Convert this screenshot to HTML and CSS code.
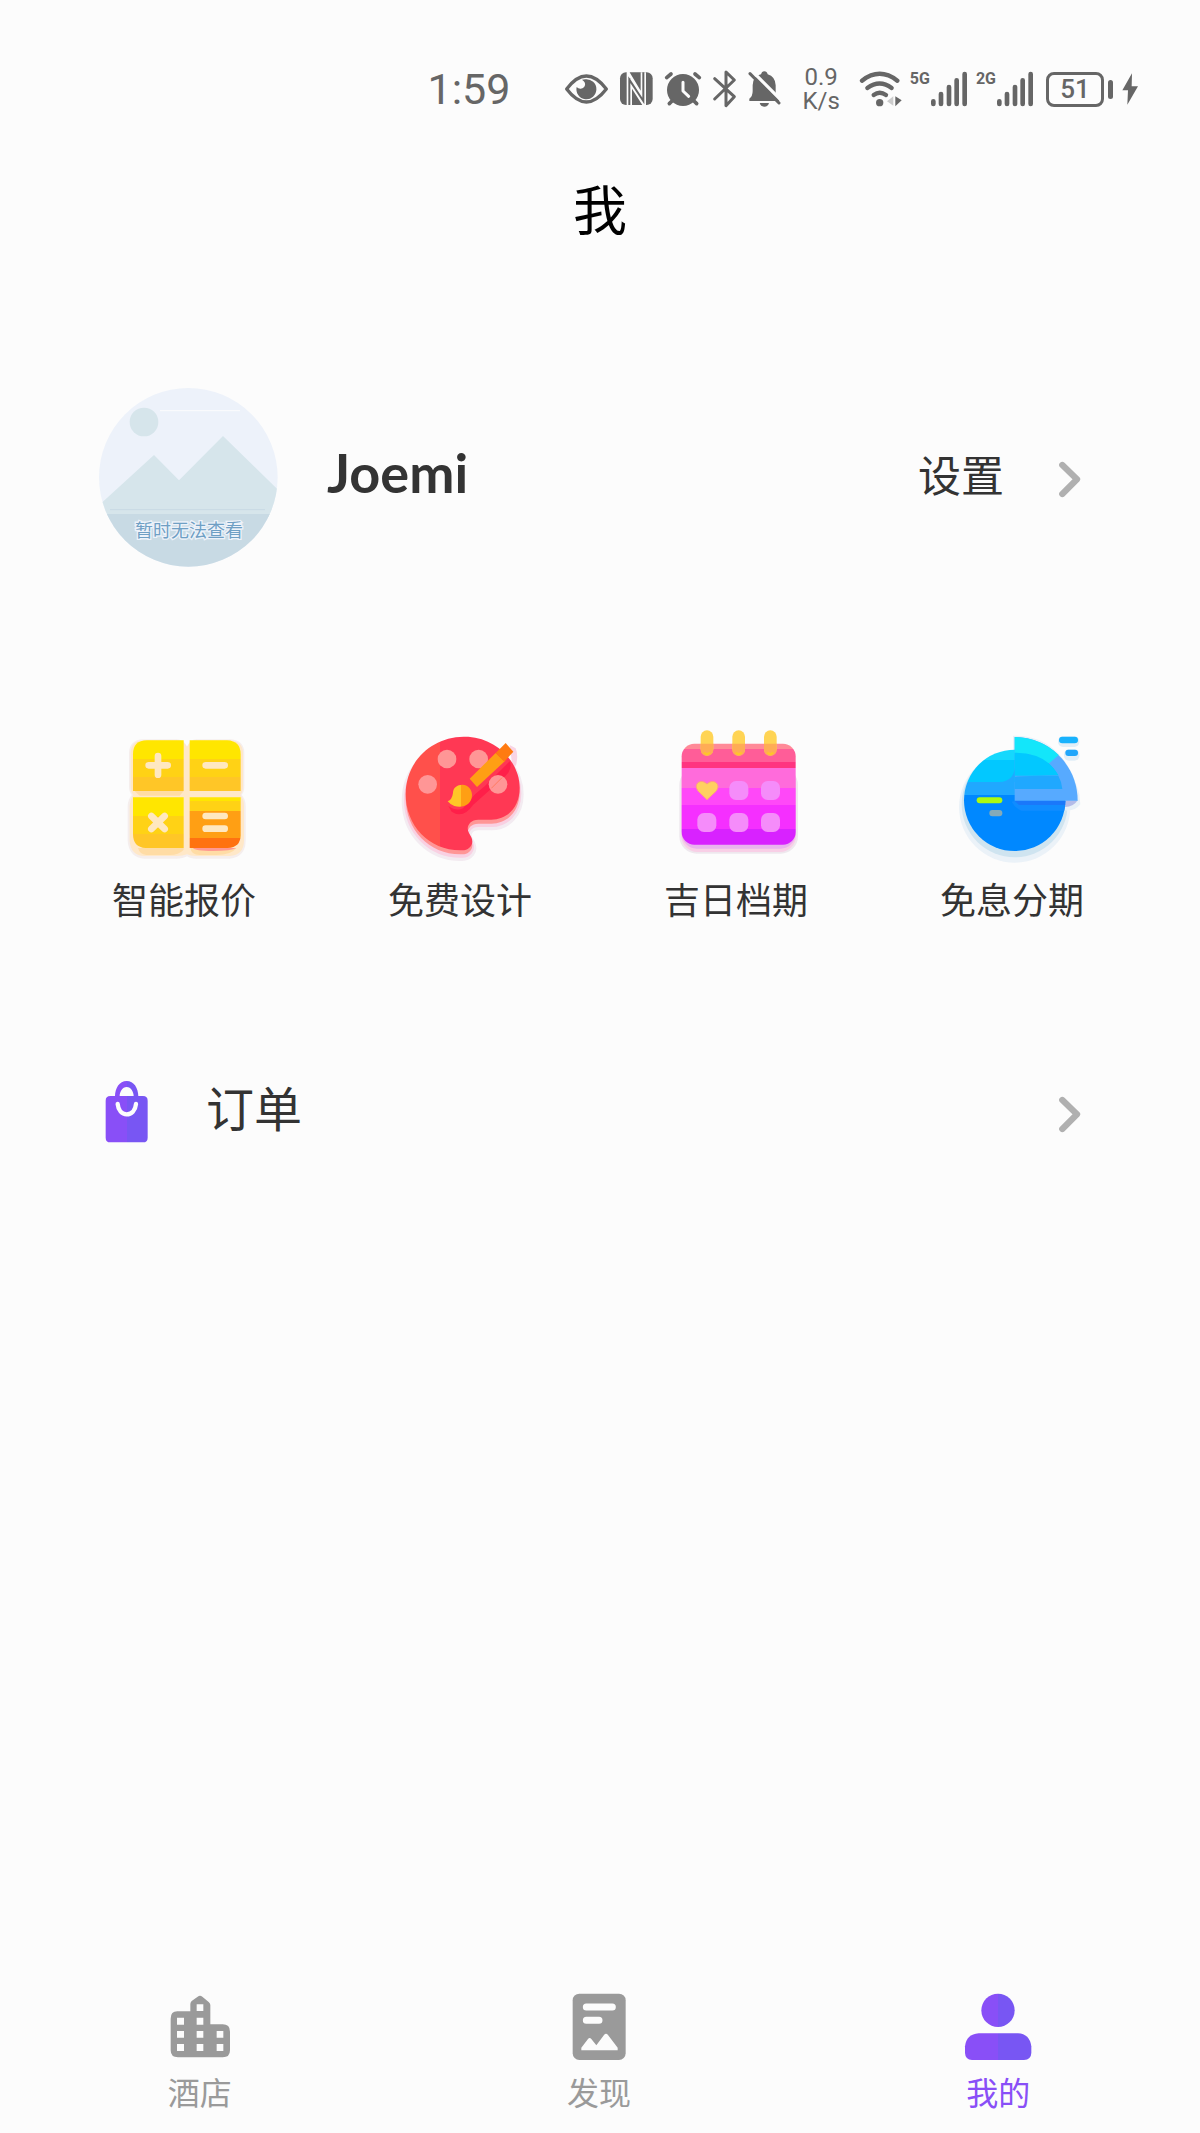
FILE: index.html
```html
<!DOCTYPE html>
<html lang="zh-CN">
<head>
  <meta charset="utf-8">
  <meta name="viewport" content="width=device-width">
  <title>我</title>
  <link rel="stylesheet" href="styles.css">
</head>
<body>
  <div class="main">
    <div class="status_bar">
      <span class="clock">1:59</span>
      <div class="status_icons">
        <svg width="46" height="40" viewBox="456 56 138 120">
          <path d="M467 116Q526 38 586 116Q526 194 467 116Z" fill="none" stroke="#666" stroke-width="10" stroke-linejoin="round"/>
          <path d="M523 87A30 30 0 1 1 497 110A15 15 0 0 0 521 108Q526 96 513 88Z" fill="#666"/>
        </svg>
        <svg width="35" height="40" viewBox="624 56 105 120">
          <rect x="627" y="66" width="98" height="98" rx="18" fill="#666"/>
          <path d="M655 164V80L697 150V66" fill="none" stroke="#fcfcfc" stroke-width="16"/>
          <path d="M653 66V95L697 164M655 76L699 150" fill="none" stroke="#fcfcfc" stroke-width="5"/>
          <path d="M655 84V164L655 88L697 152V66" fill="none" stroke="#666" stroke-width="6"/>
        </svg>
        <svg width="38" height="40" viewBox="759 56 114 120">
          <circle cx="816" cy="119" r="48" fill="#666"/>
          <path d="M767 82L780 71M865 82L852 71M783 152L775 160M849 152L857 160" stroke="#666" stroke-width="11" stroke-linecap="round"/>
          <path d="M816 96V122L833 138" fill="none" stroke="#fcfcfc" stroke-width="9" stroke-linecap="round" stroke-linejoin="round"/>
        </svg>
        <svg width="25" height="40" viewBox="903 56 75 120">
          <path d="M911 85L970 139L945 166V65L970 89L911 146" fill="none" stroke="#666" stroke-width="9" stroke-linecap="round" stroke-linejoin="round"/>
        </svg>
        <svg width="35" height="40" viewBox="1011 56 105 120">
          <path d="M1018 152V145Q1028 138 1028 122V105Q1029 77 1053 72Q1055 63 1063 63T1073 72Q1096 79 1097 105V125Q1098 138 1108 146V152Z" fill="#666"/>
          <path d="M1049 158H1077Q1074 169 1063 169T1049 158Z" fill="#666"/>
          <path d="M1026 62L1116 152" stroke="#fcfcfc" stroke-width="10"/>
          <path d="M1020 70L1107 158" stroke="#666" stroke-width="9" stroke-linecap="round"/>
        </svg>
      </div>
      <div class="net_speed">
        <div>0.9</div>
        <div>K/s</div>
      </div>
      <svg width="43" height="40" viewBox="240 56 129 120">
        <g fill="none" stroke="#666" stroke-width="13" stroke-linecap="round">
          <path d="M249 91Q302 50 355 91"/>
          <path d="M265 113Q302 86 338 113"/>
          <path d="M284 134Q302 121 321 134"/>
        </g>
        <circle cx="302" cy="157" r="11" fill="#666"/>
        <path d="M343 138V166L324 153Z" fill="#ccc"/>
        <path d="M349 138V168L368 150Z" fill="#666"/>
      </svg>
      <div class="signal">
        <span>5G</span>
        <svg width="38" height="40" viewBox="447 56 114 120">
          <path d="M457 153V161M480 131V161M504 110V161M527 90V161M551 71V161" stroke="#666" stroke-width="14" stroke-linecap="round"/>
        </svg>
      </div>
      <div class="signal">
        <span>2G</span>
        <svg width="38" height="40" viewBox="447 56 114 120">
          <path d="M457 153V161M480 131V161M504 110V161M527 90V161M551 71V161" stroke="#666" stroke-width="14" stroke-linecap="round"/>
        </svg>
      </div>
      <div class="battery">51</div>
      <svg width="16" height="40" viewBox="1026 56 48 120">
        <path d="M1056 69L1027 120H1044L1042 163L1074 108H1055Z" fill="#666"/>
      </svg>
    </div>

    <h1 class="title">我</h1>

    <div class="profile">
      <svg class="avatar" viewBox="57 53 537 537">
        <defs>
          <clipPath id="avatar_clip"><circle cx="325" cy="321" r="268"/></clipPath>
        </defs>
        <g clip-path="url(#avatar_clip)">
          <rect x="57" y="53" width="537" height="537" fill="#edf2fa"/>
          <path d="M240 121H480" stroke="#fcfcfc" stroke-width="3"/>
          <circle cx="192" cy="155" r="43" fill="#d6e5eb"/>
          <path d="M57 405L222 254L297 330L429 197L594 358V440H57Z" fill="#d6e5eb"/>
          <rect x="57" y="431" width="537" height="160" fill="#c8dae4"/>
          <path d="M90 418H555" stroke="#c8dae4" stroke-width="3"/>
        </g>
        <text class="avatar_text" x="327" y="499" text-anchor="middle">暂时无法查看</text>
      </svg>
      <span class="name">Joemi</span>
      <a class="settings" href="#settings">
        <span>设置</span>
        <svg class="arrow" viewBox="534 120 72 117">
          <path d="M547 135L591 178L547 222" fill="none" stroke="#b0b0b0" stroke-width="19" stroke-linecap="round" stroke-linejoin="round"/>
        </svg>
      </a>
    </div>

    <div class="services">
      <a href="#quote">
        <svg viewBox="28 30 450 450">
          <defs>
            <linearGradient id="yellow" x2="0" y2="1">
              <stop offset=".37" stop-color="#ffe600"/><stop offset=".37" stop-color="#ffd215"/>
              <stop offset=".72" stop-color="#ffd215"/><stop offset=".72" stop-color="#ffc627"/>
            </linearGradient>
            <linearGradient id="orange" x2="0" y2="1">
              <stop offset=".07" stop-color="#ffe600"/><stop offset=".07" stop-color="#ffd215"/>
              <stop offset=".27" stop-color="#ffd215"/><stop offset=".27" stop-color="#ff9f14"/>
              <stop offset=".8" stop-color="#ff9f14"/><stop offset=".8" stop-color="#ff7210"/>
            </linearGradient>
          </defs>
          <path d="M130 85H230Q252 85 262 106Q272 85 290 85H390Q432 86 434 125V225Q434 242 426 252Q438 265 438 285V390Q437 438 390 443H290Q272 443 262 436Q250 443 230 443H135Q88 440 84 390V285Q84 268 96 252Q88 242 88 225V125Q90 87 130 85Z" fill="#f5eeed"/>
          <path d="M132 88H230Q252 88 262 108Q272 88 290 88H390Q428 89 430 125V225Q430 242 422 252Q433 265 433 285V390Q432 432 390 435H290Q272 435 262 430Q250 435 230 435H135Q93 434 90 390V285Q90 268 100 252Q93 242 93 225V125Q94 90 132 88Z" fill="#ffe8c8"/>
          <path d="M115 411H252V416Q235 434 205 432H140Q120 430 115 411ZM285 411H410Q395 432 350 432H300Q275 432 272 411ZM105 240H252L240 254H120Z" fill="#ffdca5"/>
          <path d="M100 240V130Q100 88 142 88H252V240Z" fill="url(#yellow)"/>
          <path d="M270 88H382Q423 90 423 130V240H270Z" fill="url(#yellow)"/>
          <path d="M100 259H252V411H138Q100 409 100 369Z" fill="url(#yellow)"/>
          <path d="M280 411H410Q395 420 340 420T280 411Z" fill="#ff9991"/>
          <path d="M270 259H423V372Q423 409 384 411H270Z" fill="url(#orange)"/>
          <path d="M147 163H204M175 135V191M318 163H375M155 315L195 354M195 315L155 354M318 315H375M318 353H375" stroke="#ffe8c0" stroke-width="20" stroke-linecap="round"/>
        </svg>
        智能报价
      </a>
      <a href="#design">
        <svg viewBox="46 30 450 450">
          <defs>
            <linearGradient id="red">
              <stop offset=".3" stop-color="#ff504b"/><stop offset=".3" stop-color="#ff3854"/>
            </linearGradient>
            <linearGradient id="brush">
              <stop offset=".55" stop-color="#ffc627"/><stop offset=".55" stop-color="#ff9f14"/>
            </linearGradient>
            <path id="palette" d="M282 77C375 75 450 150 450 230C450 290 412 326 365 326H326C298 326 288 350 298 366L305 379C315 400 298 418 278 418C180 421 108 345 108 250C108 154 183 78 282 77Z"/>
          </defs>
          <use href="#palette" y="20" fill="#f9d5e5" stroke="#f3ebf1" stroke-width="24"/>
          <use href="#palette" y="17" fill="#f9d0e2" stroke="#f9d0e2" stroke-width="10"/>
          <path d="M420 102L438 112Q446 130 440 160L430 180Z" fill="#f9d5e5"/>
          <use href="#palette" y="12" fill="#ff9696"/>
          <use href="#palette" fill="url(#red)"/>
          <path d="M236 285Q260 302 280 292L316 250L345 226L420 151Q430 175 405 197L310 282Q280 325 246 302Z" fill="#ff1f49"/>
          <g fill="#ff9696">
            <circle cx="232" cy="144" r="28"/><circle cx="327" cy="144" r="28"/>
            <circle cx="174" cy="220" r="28"/><circle cx="385" cy="220" r="28"/>
          </g>
          <path d="M365 232L397 200" stroke="#ff7b60" stroke-width="3"/>
          <path d="M300 203L378 126L405 151L322 228Z" fill="#ff9f14"/>
          <path d="M378 126L408 96L431 122L404 152Z" fill="#ff7b10"/>
          <path d="M250 246C250 230 263 221 278 221C294 221 307 234 307 252C307 280 280 293 254 285Q242 281 234 271Q247 267 250 246Z" fill="url(#brush)"/>
        </svg>
        免费设计
      </a>
      <a href="#calendar">
        <svg viewBox="34 30 450 450">
          <defs>
            <linearGradient id="pink" x2="0" y2="1">
              <stop offset=".05" stop-color="#ff8a98"/><stop offset=".05" stop-color="#ff5d98"/>
              <stop offset=".18" stop-color="#ff5d98"/><stop offset=".18" stop-color="#ff3480"/>
              <stop offset=".245" stop-color="#ff3480"/><stop offset=".245" stop-color="#ff6bdb"/>
              <stop offset=".44" stop-color="#ff6bdb"/><stop offset=".44" stop-color="#ff48f8"/>
              <stop offset=".61" stop-color="#ff48f8"/><stop offset=".61" stop-color="#f52fff"/>
              <stop offset=".84" stop-color="#f52fff"/><stop offset=".84" stop-color="#d822ff"/>
            </linearGradient>
          </defs>
          <rect x="89" y="170" width="356" height="258" rx="52" fill="#eee8ee"/>
          <rect x="95" y="160" width="344" height="263" rx="48" fill="#f8cfe6"/>
          <rect x="97" y="160" width="340" height="253" rx="44" fill="#e9b3ee"/>
          <rect x="96" y="98" width="342" height="303" rx="38" fill="url(#pink)"/>
          <g fill="#ffd454">
            <rect x="153" y="58" width="38" height="76" rx="19"/>
            <rect x="248" y="58" width="38" height="76" rx="19"/>
            <rect x="343" y="58" width="38" height="76" rx="19"/>
          </g>
          <g fill="#ffac55">
            <path d="M153 98H191V115Q191 134 172 134T153 115Z"/>
            <path d="M248 98H286V115Q286 134 267 134T248 115Z"/>
            <path d="M343 98H381V115Q381 134 362 134T343 115Z"/>
          </g>
          <path d="M163 125L172 130L181 125M258 125L267 130L276 125M353 125L362 130L371 125" fill="none" stroke="#ffc627" stroke-width="6"/>
          <g fill="#f58cfa">
            <rect x="239" y="210" width="57" height="57" rx="20"/>
            <rect x="334" y="210" width="57" height="57" rx="20"/>
            <rect x="143" y="306" width="57" height="57" rx="20"/>
            <rect x="239" y="306" width="57" height="57" rx="20"/>
            <rect x="334" y="306" width="57" height="57" rx="20"/>
          </g>
          <path d="M172 266L145 240Q134 224 146 214Q160 207 172 219Q184 207 198 214Q211 224 200 240Z" fill="#ffd060" stroke="#ffa080" stroke-width="3"/>
        </svg>
        吉日档期
      </a>
      <a href="#instalment">
        <svg viewBox="22 30 450 450">
          <defs>
            <linearGradient id="blue" x2="0" y2="1">
              <stop offset=".1" stop-color="#15d8fd"/><stop offset=".1" stop-color="#02c8ff"/>
              <stop offset=".32" stop-color="#02c8ff"/><stop offset=".32" stop-color="#20a8ff"/>
              <stop offset=".45" stop-color="#20a8ff"/><stop offset=".45" stop-color="#0088ff"/>
            </linearGradient>
            <clipPath id="pie_clip"><circle cx="255" cy="268" r="152"/></clipPath>
          </defs>
          <circle cx="255" cy="288" r="167" fill="#ebf2f8"/>
          <circle cx="255" cy="280" r="159" fill="#cfe4f0"/>
          <path d="M250 74Q400 70 449 250L452 280Q435 302 405 298L250 270Z" fill="#e8f1f8"/>
          <path d="M400 268H444Q430 290 402 288Z" fill="#b4bce8"/>
          <circle cx="255" cy="268" r="152" fill="url(#blue)"/>
          <path d="M255 78C360 79 444 164 444 269H255Z" fill="#57aaff"/>
          <path d="M255 78C305 78 352 98 387 132L357 158L300 130H255Z" fill="#13e6fa"/>
          <g clip-path="url(#pie_clip)">
            <path d="M255 125Q350 125 387 193L330 194H255Z" fill="#02c8ff"/>
            <path d="M255 197L330 194H386Q396 212 398 234H255Z" fill="#20a8ff"/>
            <path d="M255 270H420V299H275Q258 293 246 272Z" fill="#108cff"/>
            <path d="M255 270H410V282H268Z" fill="#1a78fa"/>
            <path d="M255 170Q252 210 210 213H255Z" fill="#20a8ff"/>
          </g>
          <rect x="141" y="259" width="77" height="18" rx="9" fill="#adfa10"/>
          <rect x="179" y="297" width="39" height="19" rx="9" fill="#85aab8"/>
          <rect x="385" y="76" width="64" height="32" rx="15" fill="#e1eef7"/>
          <rect x="403" y="115" width="46" height="34" rx="15" fill="#e1eef7"/>
          <rect x="388" y="77" width="57" height="20" rx="10" fill="#18b2fd"/>
          <rect x="407" y="116" width="38" height="19" rx="9" fill="#20a6fb"/>
        </svg>
        免息分期
      </a>
    </div>

    <a class="order" href="#order">
      <svg class="bag" viewBox="76 57 132 192">
        <defs>
          <linearGradient id="purple">
            <stop offset=".5" stop-color="#894ff7"/><stop offset=".5" stop-color="#7856f3"/>
          </linearGradient>
        </defs>
        <path d="M92 105H106C106 82 119 60 141 60S176 82 176 105H190Q204 105 204 119V230Q204 244 190 244H92Q78 244 78 230V119Q78 105 92 105ZM120 105H162C162 93 154 78 141 78S120 93 120 105Z" fill="url(#purple)" fill-rule="evenodd"/>
        <path d="M114 129C116 149 127 160 141 160S167 149 169 129" fill="none" stroke="#fcfcfc" stroke-width="13" stroke-linecap="round"/>
      </svg>
      <span>订单</span>
      <svg class="arrow" viewBox="534 120 72 117">
        <path d="M547 135L591 178L547 222" fill="none" stroke="#b0b0b0" stroke-width="19" stroke-linecap="round" stroke-linejoin="round"/>
      </svg>
    </a>

    <div class="tab_bar">
      <a href="#hotel">
        <svg viewBox="58 50 240 240">
          <path d="M110 123H149V101Q149 96 153 92L171 79Q178 74 185 79L204 95Q209 99 209 104V162H246Q268 162 268 184V240Q268 261 246 261H112Q90 261 90 240V145Q90 123 110 123Z" fill="#9a9a9a"/>
          <path d="M168 102H188V122H168ZM109 142H130V163H109ZM168 142H188V163H168ZM109 182H130V202H109ZM168 182H188V202H168ZM228 182H248V202H228ZM109 221H130V242H109ZM168 221H188V242H168ZM228 221H248V242H228Z" fill="#fcfcfc"/>
        </svg>
        酒店
      </a>
      <a href="#discover">
        <svg viewBox="58 50 240 240">
          <rect x="99" y="70" width="159" height="199" rx="20" fill="#9a9a9a"/>
          <path d="M140 110H218M140 150H178" stroke="#fcfcfc" stroke-width="21" stroke-linecap="round"/>
          <path d="M125 240V232L145 206Q150 200 155 206L170 225L193 194Q199 187 205 194L234 232V240Z" fill="#fcfcfc"/>
        </svg>
        发现
      </a>
      <a class="active" href="#me">
        <svg viewBox="58 50 240 240">
          <circle cx="178" cy="120" r="50" fill="url(#purple)"/>
          <path d="M120 189H238Q273 191 278 228V248Q277 268 256 269H100Q80 268 79 248V228Q83 192 120 189Z" fill="url(#purple)"/>
        </svg>
        我的
      </a>
    </div>
  </div>
</body>
</html>
```
FILE: styles.css
```css
* {
  box-sizing: border-box;
}
body {
  margin: 0;
  font-family: "Noto Sans CJK SC", sans-serif;
  background-color: #fcfcfc;
  color: #333;
}
a {
  color: inherit;
  text-decoration: none;
}
svg {
  display: block;
  flex: none;
}
.main {
  display: flex;
  flex-direction: column;
  min-height: 100vh;
}
.status_bar {
  display: flex;
  align-items: center;
  justify-content: flex-end;
  padding: 48px 62px 0 0;
  height: 130px;
  color: #666;
  font-family: Roboto, sans-serif;
}
.clock {
  font-size: 43px;
  margin-right: 53px;
}
.status_icons {
  display: flex;
  gap: 10px;
  margin-right: 20px;
}
.net_speed {
  font-size: 24px;
  line-height: 24px;
  text-align: center;
  margin-right: 19px;
}
.signal {
  display: flex;
  margin-left: 8px;
}
.signal span {
  font-family: "Liberation Sans Narrow", Roboto, sans-serif;
  font-size: 16px;
  font-weight: bold;
  line-height: 20px;
}
.battery {
  position: relative;
  width: 58px;
  height: 35px;
  margin: 0 18px 0 12px;
  border: 3px solid #666;
  border-radius: 8px;
  font-size: 26px;
  font-weight: 500;
  line-height: 29px;
  text-align: center;
}
.battery::after {
  content: "";
  position: absolute;
  right: -12px;
  top: 5px;
  width: 5px;
  height: 19px;
  border-radius: 3px;
  background-color: #666;
}
.title {
  margin: 38px 0 0;
  font-size: 54px;
  font-weight: normal;
  line-height: 80px;
  text-align: center;
  color: #000;
}
.profile {
  display: flex;
  align-items: center;
  margin-top: 140px;
  padding: 0 118px 0 99px;
}
.avatar {
  width: 179px;
  height: 179px;
}
.avatar_text {
  font-size: 54px;
  fill: #6f9fc4;
  stroke: #edf2fa;
  stroke-width: 8px;
  paint-order: stroke;
}
.name {
  margin-left: 49px;
  padding-bottom: 10px;
  font-family: Lato, sans-serif;
  font-size: 54px;
  font-weight: bold;
}
.settings {
  display: flex;
  align-items: center;
  gap: 54px;
  margin-left: auto;
  font-size: 43px;
}
.settings span {
  padding-bottom: 10px;
}
.arrow {
  width: 24px;
  height: 39px;
  margin-top: 4px;
}
.services {
  display: grid;
  grid-template-columns: repeat(4, 1fr);
  margin-top: 154px;
  padding: 0 50px 0 46px;
}
.services a {
  display: flex;
  flex-direction: column;
  align-items: center;
  font-size: 36px;
  line-height: 54px;
}
.services svg {
  width: 150px;
  height: 150px;
}
.order {
  display: flex;
  align-items: center;
  margin-top: 141px;
  padding: 0 118px 0 105px;
  font-size: 48px;
  line-height: 80px;
}
.bag {
  width: 44px;
  height: 64px;
}
.order span {
  flex: 1;
  margin-left: 57px;
  padding-bottom: 12px;
}
.tab_bar {
  display: grid;
  grid-template-columns: repeat(3, 1fr);
  margin-top: auto;
  padding: 0 2px 18px 0;
}
.tab_bar a {
  display: flex;
  flex-direction: column;
  align-items: center;
  font-size: 32px;
  line-height: 48px;
  color: #9a9a9a;
}
.tab_bar svg {
  width: 80px;
  height: 80px;
}
.tab_bar .active {
  color: #894ff7;
}
```
